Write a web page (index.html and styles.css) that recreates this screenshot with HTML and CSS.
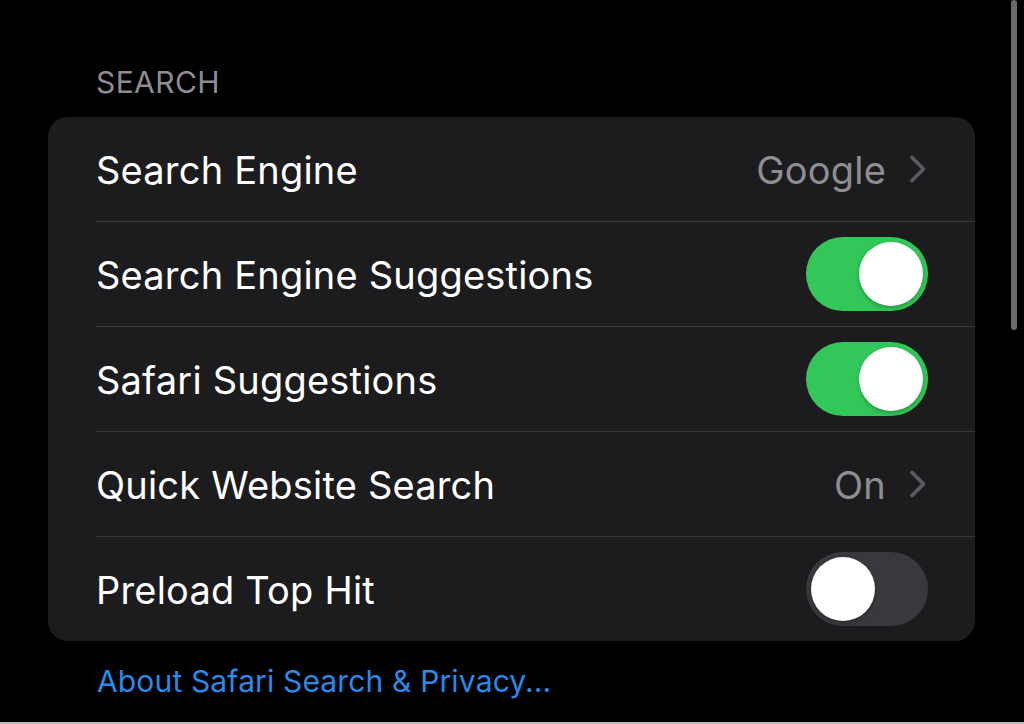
FILE: index.html
```html
<!DOCTYPE html>
<html>
<head>
<meta charset="utf-8">
<link rel="stylesheet" href="styles.css">
</head>
<body>
<div class="page">
  <div class="section-title">SEARCH</div>
  <div class="card">
    <div class="row">
      <span class="label">Search Engine</span>
      <span class="detail">Google<svg class="chev" viewBox="0 0 20 30" width="20" height="30"><path d="M4 3.5 L15.5 15 L4 26.5" fill="none" stroke="currentColor" stroke-width="3.6" stroke-linecap="round" stroke-linejoin="round"/></svg></span>
    </div>
    <div class="row">
      <span class="label">Search Engine Suggestions</span>
      <span class="toggle on"><span class="knob"></span></span>
    </div>
    <div class="row">
      <span class="label">Safari Suggestions</span>
      <span class="toggle on"><span class="knob"></span></span>
    </div>
    <div class="row">
      <span class="label">Quick Website Search</span>
      <span class="detail">On<svg class="chev" viewBox="0 0 20 30" width="20" height="30"><path d="M4 3.5 L15.5 15 L4 26.5" fill="none" stroke="currentColor" stroke-width="3.6" stroke-linecap="round" stroke-linejoin="round"/></svg></span>
    </div>
    <div class="row">
      <span class="label">Preload Top Hit</span>
      <span class="toggle"><span class="knob"></span></span>
    </div>
  </div>
  <div class="footer-link">About Safari Search &amp; Privacy...</div>
</div>
<div class="scrollbar"></div>
</body>
</html>
```

FILE: styles.css
```css
html, body {
  margin: 0;
  padding: 0;
  background: #000;
  width: 1024px;
  height: 724px;
  overflow: hidden;
}
body {
  font-family: Inter, "Liberation Sans", sans-serif;
  color: #fff;
  position: relative;
  border-bottom: 2px solid #bdbdbd;
  box-sizing: border-box;
}
.page {
  padding: 63px 49px 0 48px;
}
.section-title {
  color: #8d8d92;
  font-size: 30px;
  letter-spacing: 0.4px;
  padding-left: 48px;
  height: 54px;
  line-height: 38px;
}
.card {
  background: #1c1c1e;
  border-radius: 20px;
  width: 927px;
  overflow: hidden;
}
.row {
  display: flex;
  align-items: center;
  justify-content: space-between;
  height: 105px;
  margin-left: 48px;
  padding-right: 47px;
  border-bottom: 1px solid #38383a;
  box-sizing: border-box;
}
.row:last-child {
  border-bottom: none;
  height: 104px;
}
.label {
  font-size: 38px;
  letter-spacing: 0.2px;
  padding-left: 0;
  padding-top: 2px;
}
.detail {
  display: flex;
  align-items: center;
  color: #8d8d92;
  font-size: 38px;
  letter-spacing: 0.2px;
  padding-top: 2px;
}
.chev {
  color: #5b5b60;
  margin-left: 22px;
  margin-right: 0;
  margin-top: -2px;
}
.toggle {
  width: 122px;
  height: 74px;
  border-radius: 37px;
  background: #39393d;
  position: relative;
}
.toggle.on {
  background: #32c759;
}
.knob {
  position: absolute;
  top: 5px;
  left: 5px;
  width: 64px;
  height: 64px;
  border-radius: 50%;
  background: #fff;
  box-shadow: 0 2px 4px rgba(0,0,0,0.25);
}
.toggle.on .knob {
  left: 53px;
}
.footer-link {
  color: #2a8ae8;
  font-size: 30px;
  padding: 22px 0 0 49px;
  letter-spacing: 0.15px;
}
.scrollbar {
  position: absolute;
  top: 0;
  left: 1011px;
  width: 6px;
  height: 330px;
  border-radius: 3px;
  background: #6b6b6b;
}
```
